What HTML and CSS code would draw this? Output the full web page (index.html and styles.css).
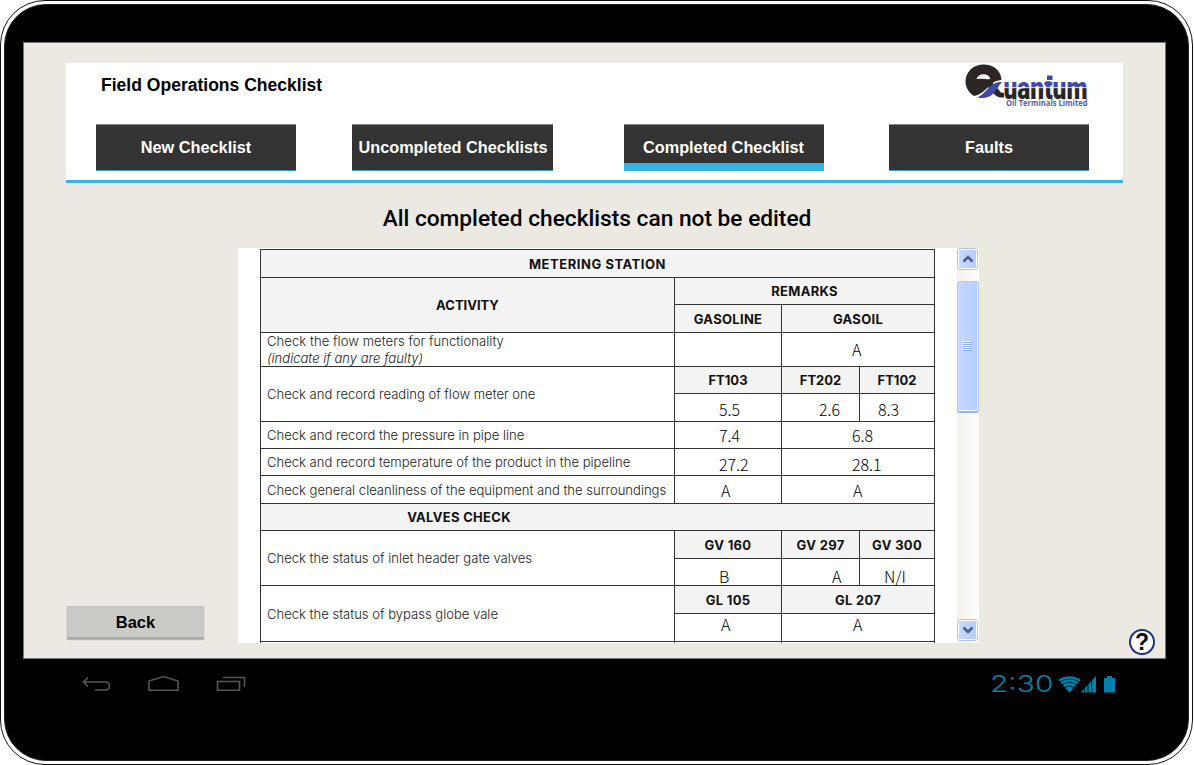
FILE: index.html
```html
<!DOCTYPE html>
<html lang="en">
<head>
<meta charset="utf-8">
<title>Field Operations Checklist</title>
<link rel="stylesheet" href="styles.css">
</head>
<body>
<div class="device">
  <div class="bezel">
    <main class="screen">
      <header class="header">
        <div class="brand">
          <h1 class="app-title">Field Operations Checklist</h1>
          <svg class="logo" width="128" height="50" viewBox="962 62 128 50">
            <defs>
              <linearGradient id="ink" gradientUnits="userSpaceOnUse" x1="0" y1="78" x2="0" y2="98">
                <stop offset="0.1" stop-color="#3d4aa8" stop-opacity="0"/>
                <stop offset="0.13" stop-color="#3d4aa8"/>
                <stop offset="0.38" stop-color="#3d4aa8"/>
                <stop offset="0.41" stop-color="#c8c8d4"/>
                <stop offset="0.45" stop-color="#c8c8d4"/>
                <stop offset="0.48" stop-color="#2b2523"/>
              </linearGradient>
            </defs>
            <path d="M974 95C968 91 965.500 86 965.500 80C966 70 974 63.500 983.500 63.500C993 63.500 1001 69 1001.500 79C995 81 991 84 987 88C983 91 979 94 974 95Z" fill="#2b2523"/>
            <path d="M976.500 78C978 72 988 71.500 990.500 77.500C987 79.500 984 77 976.500 78Z" fill="#fff"/>
            <path d="M974 97C981 94 985 89 989 85C993 81 997 79 1003 79L1001 83L984 97Z" fill="#fff"/>
            <path d="M977 79C984 77 990 79 993.500 83L999 89C1000 91 1001 92 1004 92V96.500C1000 97 997 96 994 93C988 86 985 82 977 79Z" fill="#2b2523"/>
            <path d="M977.500 96.500C984 93 987 88 991 84.500C994 82 998 80.500 1002 81C999 84 997 89 993 93C989 96.500 984 98 977.500 96.500Z" fill="#3d4aa8"/>
            <text class="logo-word" x="1003.500" y="97.500" textLength="84" lengthAdjust="spacingAndGlyphs" fill="url(#ink)">uantum</text>
            <rect x="1047" y="74.500" width="5.500" height="4.500" fill="#3d4aa8"/>
            <text class="logo-tag" x="1006" y="105.400" textLength="81.500" lengthAdjust="spacingAndGlyphs">Oil Terminals Limited</text>
          </svg>
        </div>
        <nav class="tabs">
          <a class="tab">New Checklist</a>
          <a class="tab">Uncompleted Checklists</a>
          <a class="tab active">Completed Checklist</a>
          <a class="tab">Faults</a>
        </nav>
      </header>

      <h2 class="notice">All completed checklists can not be edited</h2>

      <div class="body">
        <button class="back">Back</button>
        <section class="viewer">
          <div class="sheet">
            <div class="grid">
              <div class="head all title">METERING STATION</div>
              <div class="head tall">ACTIVITY</div>
              <div class="head remarks spaced">REMARKS</div>
              <div class="head spaced">GASOLINE</div>
              <div class="head wide spaced">GASOIL</div>

              <div class="task double"><span class="first">Check the flow meters for functionality</span><em>(indicate if any are faulty)</em></div>
              <div class="val"></div>
              <div class="val wide tick">A</div>

              <div class="task tall">Check and record reading of flow meter one</div>
              <div class="head">FT103</div>
              <div class="head">FT202</div>
              <div class="head">FT102</div>
              <div class="val low">5.5</div>
              <div class="val low mid">2.6</div>
              <div class="val low end">8.3</div>

              <div class="task">Check and record the pressure in pipe line</div>
              <div class="val raised">7.4</div>
              <div class="val wide raised">6.8</div>

              <div class="task">Check and record temperature of the product in the pipeline</div>
              <div class="val">27.2</div>
              <div class="val wide">28.1</div>

              <div class="task">Check general cleanliness of the equipment and the surroundings</div>
              <div class="val letter">A</div>
              <div class="val wide letter">A</div>

              <div class="head all valves spaced">VALVES CHECK</div>

              <div class="task tall">Check the status of inlet header gate valves</div>
              <div class="head spaced">GV 160</div>
              <div class="head spaced">GV 297</div>
              <div class="head spaced">GV 300</div>
              <div class="val lowest">B</div>
              <div class="val lowest mid letter-mid">A</div>
              <div class="val lowest end letter-end">N/I</div>

              <div class="task tall">Check the status of bypass globe vale</div>
              <div class="head spaced">GL 105</div>
              <div class="head wide spaced">GL 207</div>
              <div class="val letter up">A</div>
              <div class="val wide letter up">A</div>

              <div class="task"></div>
              <div class="val"></div>
              <div class="val wide"></div>
            </div>
          </div>
          <div class="scrollbar">
            <div class="arrow"><svg width="12" height="8" viewBox="0 0 12 8"><path d="M1.500 6.500L6 2L10.500 6.500"/></svg></div>
            <div class="thumb"><i></i><i></i><i></i><i></i><i></i></div>
            <div class="arrow down"><svg width="12" height="8" viewBox="0 0 12 8"><path d="M1.500 1.500L6 6L10.500 1.500"/></svg></div>
          </div>
        </section>
        <div class="help">?</div>
      </div>
    </main>

    <footer class="system">
      <div class="keys">
        <svg width="30" height="18" viewBox="82 675 30 18"><path d="M88 677.500L83.500 682L88 686.500M84 682H105C111 682 111 690 105 690H95"/></svg>
        <svg width="32" height="18" viewBox="148 675 32 18"><path d="M149 690.300V681L163.500 676.500L178 681V690.300Z"/></svg>
        <svg width="30" height="18" viewBox="216 675 30 18"><path d="M217.500 681.500H239.500V690.300H217.500ZM223 677.500H244.500V687"/></svg>
      </div>
      <div class="status">
        <span class="clock">2:30</span>
        <svg width="58" height="20" viewBox="1058 674 58 20">
          <path fill="#0081ad" d="M1058.500 679C1065 674 1074 674 1080.500 679L1069.500 691.500Z"/>
          <path fill="none" stroke="#000" stroke-width=".8" d="M1060 681C1066 677 1073 677 1079 681M1062 684C1067 680.500 1072 680.500 1077 684M1064 687C1068 684.500 1071 684.500 1075 687"/>
          <path fill="#0081ad" d="M1080.500 691.500L1096 675V691.500Z"/>
          <path stroke="#000" stroke-width=".8" d="M1084.500 686V692M1088 683V692M1091.700 679V692"/>
          <path fill="#0081ad" d="M1104 677H1107V675H1112V677H1115V691.500H1104Z"/>
        </svg>
      </div>
    </footer>
  </div>
</div>
</body>
</html>
```
FILE: styles.css
```css
* { box-sizing: border-box; }

body {
  margin: 0;
  background: #fff;
  font-family: "Liberation Sans", Arial, sans-serif;
  color: #000;
  overflow: hidden;
}

.device {
  width: 1193px;
  height: 765px;
  padding: 3px;
  border: 1px solid #111;
  border-radius: 45px;
}

.bezel {
  height: 757px;
  padding: 37px 23px 0 18px;
  background: #000;
  border-radius: 42px;
  border: 1px solid #222;
}

.screen {
  width: 1143px;
  height: 617px;
  padding: 20px 42px 0;
  background: #ece9e2;
  border: 1px solid #777;
}

.header {
  height: 120px;
  width: 1057px;
  background: #fff;
  border-bottom: 3px solid #35b4e5;
}

.brand {
  display: flex;
  justify-content: space-between;
  height: 61px;
  padding: 0 33px 0 35px;
}

.app-title {
  margin: 12px 0 0;
  font-size: 17.550px;
  line-height: 20px;
  font-weight: 700;
}

.logo-word { font: 900 31px Roboto, sans-serif; }
.logo-tag { font: 700 8px "Open Sans", sans-serif; fill: #5560b0; }

.tabs {
  display: flex;
  padding-left: 30px;
}

.tab {
  width: 200px;
  height: 47px;
  margin-right: 56px;
  background: #333;
  border: 1px solid #888;
  border-width: 1px 0 1px 0;
  border-bottom-color: #35a5d0;
  color: #fff;
  font-size: 16.300px;
  font-weight: 700;
  line-height: 45px;
  text-align: center;
  white-space: nowrap;
}

.tab:nth-child(2) { width: 201px; margin-right: 71px; padding-left: 1px; }
.tab:nth-child(3) { margin-right: 65px; padding-right: 1px; }
.tab:last-child { margin-right: 0; }
.tab.active { border-bottom: 8px solid #35b4e5; }

.notice {
  margin: 22px 0 15px;
  font: 500 22.700px/28px Roboto, sans-serif;
  text-align: center;
  padding-left: 5px;
}

.body {
  display: flex;
  align-items: flex-end;
  width: 1100px;
  height: 407px;
}

.back {
  flex: none;
  width: 137px;
  height: 33px;
  margin: 0 34px 16px 1px;
  padding: 0;
  border: 1px solid #c0c0bc;
  border-bottom: 2px solid #a9a9a6;
  background: #cacac6;
  box-shadow: 0 1px 1px #b8b6b0;
  font: 700 16.500px "Liberation Sans", sans-serif;
  color: #000;
}

.viewer {
  display: flex;
  flex: none;
  align-self: flex-start;
  width: 741px;
  height: 395px;
}

.sheet {
  width: 719px;
  padding: 1px 0 0 22px;
  background: #fff;
  overflow: hidden;
}

.grid {
  display: grid;
  grid-template-columns: 413px 106px 77px 74px;
  grid-template-rows: 27px 26px 27px 33px 26px 27px 26px 26px 27px 26px 27px 26px 27px 27px 20px;
  gap: 1px;
  width: 675px;
  padding: 1px;
  background: #333;
}

.grid > div { background: #fff; white-space: nowrap; }

.grid > .head {
  display: flex;
  align-items: center;
  justify-content: center;
  background: #f3f3f3;
  font: 700 13px Inter, sans-serif;
  color: #111;
}

.grid > .all { grid-column: 1 / -1; }
.grid > .spaced { letter-spacing: 0.300px; }
.grid > .title { letter-spacing: 0.550px; }
.grid > .valves { padding-right: 277px; }
.grid > .tall { grid-row: span 2; }
.grid > .remarks { grid-column: span 3; }
.grid > .wide { grid-column: span 2; }

.task {
  display: flex;
  grid-column: 1;
  align-items: center;
  padding-left: 6px;
  font: 300 13.050px Inter, sans-serif;
  color: #222;
}

.task.double {
  flex-direction: column;
  align-items: flex-start;
  line-height: 16.500px;
}

.first { letter-spacing: 0.060px; }

.val {
  padding: 2px 0 0 44px;
  font: 300 16px/26px "Noto Sans CJK SC", sans-serif;
}

.val.wide { padding-left: 70px; }
.val.low { padding-top: 2px; }
.val.tick { padding-top: 3px; }
.val.raised { padding-top: 0; }
.val.lowest { padding-top: 6px; line-height: 22px; }
.val.mid { padding-left: 37px; }
.val.end { padding-left: 18px; }
.val.letter { padding: 1px 0 0 46px; }
.val.wide.letter { padding-left: 71px; }
.val.letter-mid { padding-left: 50px; }
.val.letter-end { padding-left: 24px; }
.val.letter.up { padding-top: 0; line-height: 20px; }

.scrollbar {
  display: flex;
  flex-direction: column;
  width: 22px;
  padding: 0 0 2px;
  background: linear-gradient(90deg, #f2f1ea, #fffefd);
}

.arrow {
  display: flex;
  align-items: center;
  justify-content: center;
  width: 21px;
  height: 22px;
  border: 1px solid #fff;
  outline: 1px solid #acc6f3;
  outline-offset: -1px;
  border-radius: 3px;
  box-shadow: inset 0 0 0 1px #fff;
  background: linear-gradient(90deg, #cad9fd, #b4cbfa);
}

.arrow.down { margin-top: auto; }
.arrow path { fill: none; stroke: #4d6185; stroke-width: 2.600px; }

.thumb {
  display: flex;
  flex-direction: column;
  align-items: center;
  justify-content: center;
  gap: 1px;
  width: 22px;
  height: 132px;
  margin: 11px 0 0;
  padding: 0 4px 2px 0;
  border: 1px solid #b4caf4;
  border-bottom: 2px solid #94b8ee;
  border-radius: 3px;
  box-shadow: inset -1px -1px 0 #f0f5ff;
  background: linear-gradient(90deg, #c8d7fd, #b3cffc);
}

.thumb i { width: 9px; height: 1px; background: #f0f6ff; box-shadow: 1px 1px 0 #8cb0f8; }

.help {
  display: flex;
  align-items: center;
  justify-content: center;
  width: 26px;
  height: 26px;
  margin-left: 150px;
  flex: none;
  border: 2px solid #1d3181;
  border-radius: 50%;
  background: #fff;
  font-size: 23px;
  font-weight: 700;
}

.system {
  display: flex;
  justify-content: space-between;
  padding: 16px 49px 0 59px;
}

.keys { display: flex; gap: 36px; }
.keys path { fill: none; stroke: #555; stroke-width: 1.600px; }

.status { display: flex; }

.clock {
  width: 68px;
  font: 300 23px/19px Inter, sans-serif;
  color: #0881aa;
  transform: scaleX(1.300);
  transform-origin: left;
}
```
